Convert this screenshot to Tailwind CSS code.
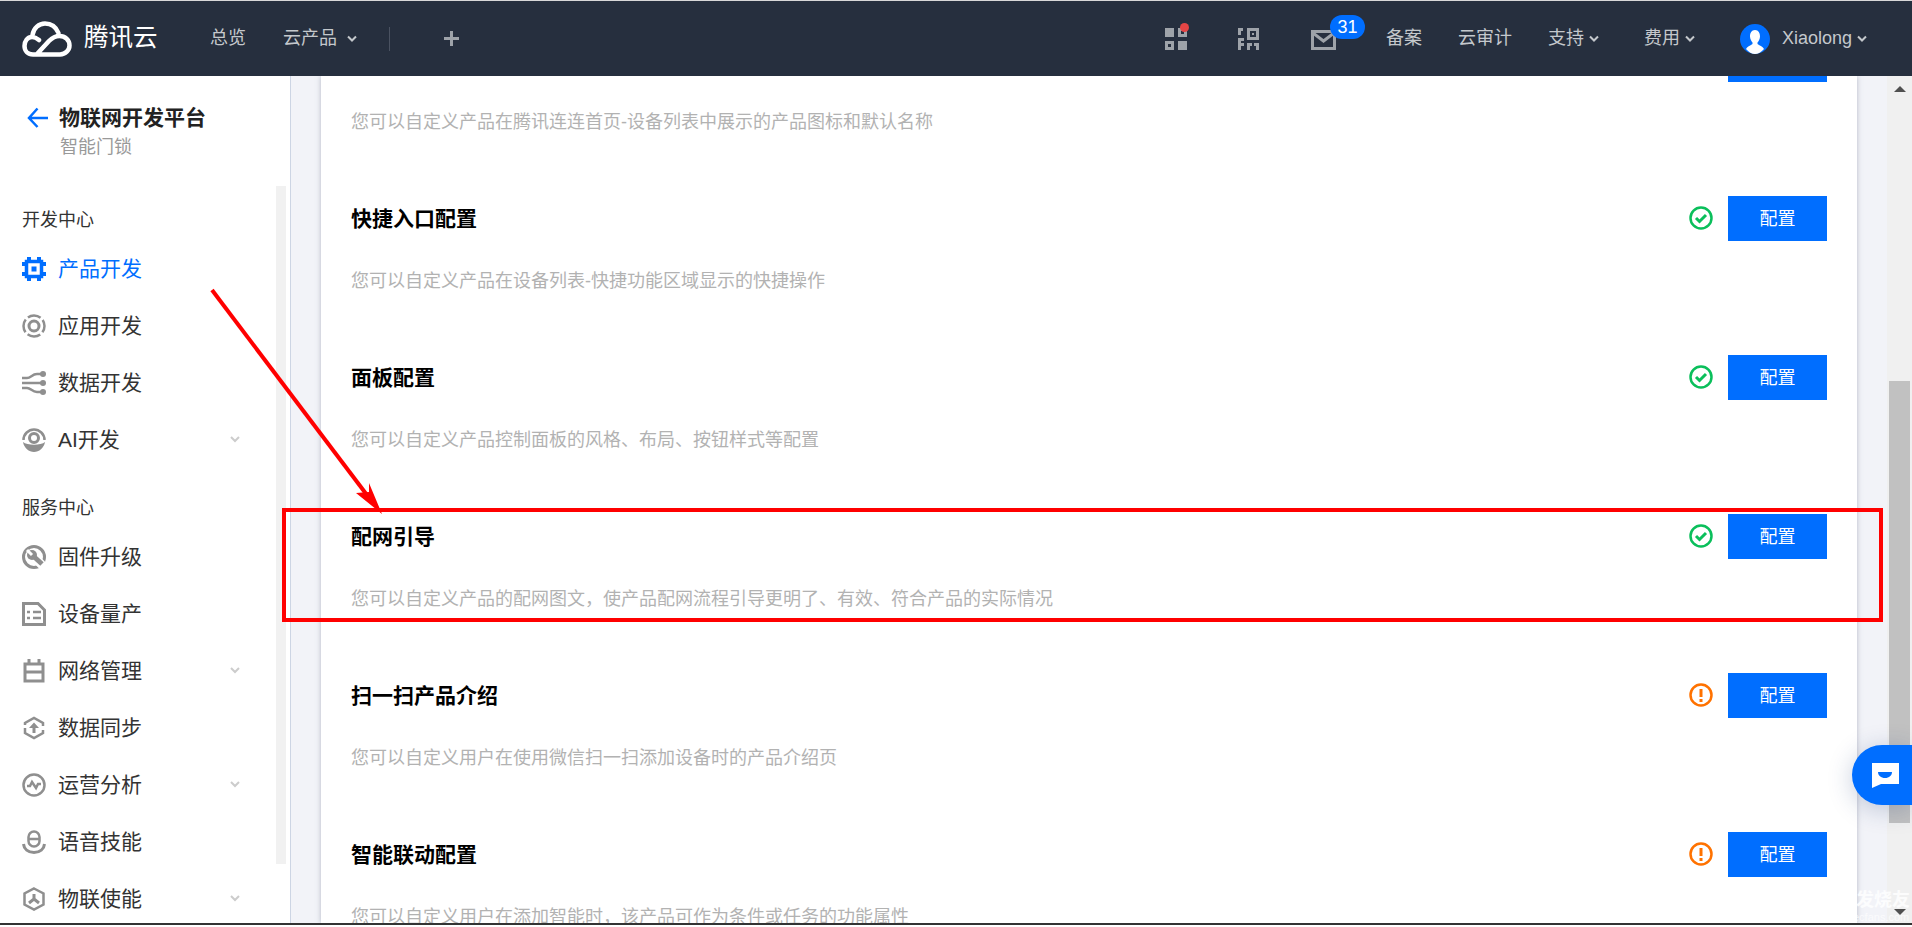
<!DOCTYPE html>
<html lang="zh-CN">
<head>
  <meta charset="UTF-8">
  <title>物联网开发平台</title>
  <script src="https://cdn.jsdelivr.net/npm/@tailwindcss/browser@4"></script>
</head>
<body class="relative h-[927px] w-[1912px] overflow-hidden bg-white font-['Liberation_Sans','Noto_Sans_CJK_SC',sans-serif] text-[18px]">
  <div class="h-px bg-[#d8d8d8]"></div>

  <!-- Header -->
  <header class="flex h-[75px] items-center bg-[#262f3e] pl-[22px] text-[18px] text-[#c4c8cc]">
    <svg class="h-[36px] w-[50px]" viewBox="0 0 50 36" fill="none" stroke="#fff" stroke-width="4.500" stroke-linecap="round" stroke-linejoin="round">
      <path d="M17 19C14 16.500 12 16 10 16C5.500 16 2.500 20 2.500 25C2.500 30 6 33.500 11 33.500H38C43.500 33.500 47.500 29 47.500 24.500C47.500 19 43 15 37.500 15C33 15 30 17 27 20L15 33"/>
      <path d="M10.500 14C11.500 7 17 2.500 23 2.500C29 2.500 34 6 36.500 12"/>
    </svg>
    <span class="ml-[12px] text-[24.500px] text-white">腾讯云</span>
    <span class="ml-[52.500px]">总览</span>
    <span class="ml-[37px]">云产品</span>
    <svg class="ml-[10px] h-[8px] w-[10px]" viewBox="0 0 10 8" fill="none" stroke="#c4c8cc" stroke-width="2"><path d="M1 1.500L5 5.500L9 1.500"/></svg>
    <div class="ml-[32px] h-[24px] w-px bg-[#4a5261]"></div>
    <svg class="ml-[54px] h-[15px] w-[15px]" viewBox="0 0 15 15" fill="#9ea3a9"><path d="M6 0H9V6H15V9H9V15H6V9H0V6H6Z"/></svg>

    <div class="ml-auto flex items-center">
      <div class="relative h-[22px] w-[22px]">
        <svg class="h-[22px] w-[22px]" viewBox="0 0 22 22" fill="#9ea3a9"><path d="M0 0H9V9H0ZM0 13H9V22H0ZM13 13H22V22H13ZM13 0H22V9H13Z"/><path fill="#262f3e" d="M3 16H6V19H3ZM16 3H19V6H16Z"/></svg>
        <div class="absolute -top-[5px] left-[15px] h-[9px] w-[9px] rounded-full bg-[#e54545]"></div>
      </div>
      <svg class="ml-[50px] h-[22px] w-[22px]" viewBox="0 0 22 22" fill="#9ea3a9"><path d="M1 0H6V3H4V7H1ZM10 0H22V12H10ZM13 3V9H19V3ZM15 5H17V7H15ZM1 10H7V13H4V15H7V18H4V22H1ZM10 15H15V18H13V22H10ZM17 15H22V22H19V18H17Z"/></svg>
      <div class="relative ml-[52px] mt-[3px] h-[20px] w-[25px]">
        <svg class="h-[20px] w-[25px]" viewBox="0 0 25 20" fill="none" stroke="#9ea3a9" stroke-width="3"><path d="M1.500 1.500H23.500V18.500H1.500Z"/><path d="M2 3L12.500 11L23 3"/></svg>
        <div class="absolute -top-[15px] left-[19px] flex h-[24px] w-[35px] items-center justify-center rounded-[12px] bg-[#006eff] text-[18px] text-white">31</div>
      </div>
      <span class="ml-[50px]">备案</span>
      <span class="ml-[36px]">云审计</span>
      <span class="ml-[36px]">支持</span>
      <svg class="ml-[5px] h-[8px] w-[10px]" viewBox="0 0 10 8" fill="none" stroke="#c4c8cc" stroke-width="2"><path d="M1 1.500L5 5.500L9 1.500"/></svg>
      <span class="ml-[45px]">费用</span>
      <svg class="ml-[5px] h-[8px] w-[10px]" viewBox="0 0 10 8" fill="none" stroke="#c4c8cc" stroke-width="2"><path d="M1 1.500L5 5.500L9 1.500"/></svg>
      <svg class="ml-[45px] h-[30px] w-[30px]" viewBox="0 0 30 30"><circle cx="15" cy="15" r="15" fill="#006eff"/><path fill="#fff" d="M15 6C11.500 6 10 9 10 12.500C10 15 11.500 17.500 12.500 18.500V20C10 22 7 22.500 6 25C8.500 28 12 30 15 30C18 30 21.500 28 24 25C23 22.500 20 22 17.500 20V18.500C18.500 17.500 20 15 20 12.500C20 9 18.500 6 15 6Z"/></svg>
      <span class="ml-[12px]">Xiaolong</span>
      <svg class="ml-[5px] mr-[45px] h-[8px] w-[10px]" viewBox="0 0 10 8" fill="none" stroke="#c4c8cc" stroke-width="2"><path d="M1 1.500L5 5.500L9 1.500"/></svg>
    </div>
  </header>

  <div class="flex h-[849px] border-b-2 border-[#333]">
    <!-- Sidebar -->
    <aside class="relative h-full w-[291px] shrink-0 overflow-hidden border-r border-[#cdd5e4] bg-white">
      <div class="absolute left-[276px] top-[110px] h-[678px] w-[10px] bg-[#f1f1f1]"></div>
      <div class="flex items-center pl-[27px] pt-[28px]">
        <svg class="h-[22px] w-[22px]" viewBox="0 0 22 22" fill="none" stroke="#006eff" stroke-width="2.500"><path d="M21 11H2M10.500 1.500L2 11L10.500 20"/></svg>
        <span class="ml-[10px] text-[21px] font-bold leading-[28px] text-[#222]">物联网开发平台</span>
      </div>
      <p class="mt-[2px] pl-[60px] leading-[26px] text-[#999]">智能门锁</p>

      <p class="pl-[22px] pt-[47px] leading-[26px] text-[#333]">开发中心</p>
      <ul class="mt-[7px] text-[21px] text-[#333]">
        <li class="flex h-[57px] items-center pl-[22px] text-[#006eff]">
          <svg class="h-[24px] w-[24px]" viewBox="0 0 24 24" fill="none" stroke="#006eff"><rect x="4.500" y="4.500" width="15" height="15" stroke-width="3.500"/><rect x="9.500" y="9.500" width="5" height="5" fill="#006eff" stroke="none"/><path stroke-width="4" d="M7 0V4M17 0V4M7 20V24M17 20V24M0 7H4M0 17H4M20 7H24M20 17H24"/></svg>
          <span class="ml-[12px]">产品开发</span>
        </li>
        <li class="flex h-[57px] items-center pl-[22px]">
          <svg class="h-[24px] w-[24px]" viewBox="0 0 24 24" fill="none" stroke="#8f8f8f"><circle cx="12" cy="12" r="10.500" stroke-width="2.500" stroke-dasharray="13.500 2.990" stroke-dashoffset="6.750"/><circle cx="12" cy="12" r="5" stroke-width="3"/></svg>
          <span class="ml-[12px]">应用开发</span>
        </li>
        <li class="flex h-[57px] items-center pl-[22px]">
          <svg class="h-[24px] w-[24px]" viewBox="0 0 24 24" fill="none" stroke="#8f8f8f" stroke-width="2.500"><path d="M0 7H5C9 7 10 3 15 3H20M0 12H20M0 17H5C9 17 10 21 15 21H20"/><g fill="#8f8f8f" stroke="none"><circle cx="21" cy="3" r="3"/><circle cx="21" cy="12" r="3"/><circle cx="21" cy="21" r="3"/></g></svg>
          <span class="ml-[12px]">数据开发</span>
        </li>
        <li class="flex h-[57px] items-center pl-[22px]">
          <svg class="h-[24px] w-[24px]" viewBox="0 0 24 24" fill="none" stroke="#8f8f8f" stroke-width="2.500"><path d="M1.500 12C1.500 6 6.500 1.500 12 1.500C17.500 1.500 22.500 6 22.500 12"/><circle cx="12" cy="10" r="4.500" stroke-width="3"/><path fill="#8f8f8f" stroke="none" d="M1 14C5 17.500 19 17.500 23 14C22 20 17 24 12 24C7 24 2 20 1 14Z"/></svg>
          <span class="ml-[12px]">AI开发</span>
          <svg class="absolute left-[230px] h-[7px] w-[10px]" viewBox="0 0 10 7" fill="none" stroke="#ccc" stroke-width="2"><path d="M1 1L5 5L9 1"/></svg>
        </li>
      </ul>

      <p class="pl-[22px] pt-[27px] leading-[26px] text-[#333]">服务中心</p>
      <ul class="mt-[7px] text-[21px] text-[#333]">
        <li class="flex h-[57px] items-center pl-[22px]">
          <svg class="h-[24px] w-[24px]" viewBox="0 0 24 24" fill="none" stroke="#8f8f8f"><circle cx="12" cy="12" r="10.500" stroke-width="3"/><path stroke="#fff" stroke-width="9" d="M11 11L24 24"/><path stroke-width="5" d="M9 9L20 19"/><circle cx="10" cy="10" r="5" fill="#8f8f8f" stroke="none"/><path stroke="#fff" stroke-width="3" d="M5 5L10 10"/></svg>
          <span class="ml-[12px]">固件升级</span>
        </li>
        <li class="flex h-[57px] items-center pl-[22px]">
          <svg class="h-[24px] w-[24px]" viewBox="0 0 24 24" fill="none" stroke="#8f8f8f" stroke-width="3"><path d="M1.500 1.500H16L22.500 8V22.500H1.500Z"/><path stroke-width="2.500" d="M5 10H8M11 10H19M5 16H8M11 16H19"/></svg>
          <span class="ml-[12px]">设备量产</span>
        </li>
        <li class="flex h-[57px] items-center pl-[22px]">
          <svg class="h-[24px] w-[24px]" viewBox="0 0 24 24" fill="none" stroke="#8f8f8f" stroke-width="3"><path d="M3 5H21V22H3ZM3 13H21M7 0V5M17 0V5"/></svg>
          <span class="ml-[12px]">网络管理</span>
          <svg class="absolute left-[230px] h-[7px] w-[10px]" viewBox="0 0 10 7" fill="none" stroke="#ccc" stroke-width="2"><path d="M1 1L5 5L9 1"/></svg>
        </li>
        <li class="flex h-[57px] items-center pl-[22px]">
          <svg class="h-[24px] w-[24px]" viewBox="0 0 24 24" fill="none" stroke="#8f8f8f" stroke-width="2.500"><path d="M3 9V7L12 2L21 7V10M21 14V17L12 22L3 17V12"/><path fill="#8f8f8f" stroke="none" d="M12 6.500L17 12H13.500V17H10.500V12H7Z"/></svg>
          <span class="ml-[12px]">数据同步</span>
        </li>
        <li class="flex h-[57px] items-center pl-[22px]">
          <svg class="h-[24px] w-[24px]" viewBox="0 0 24 24" fill="none" stroke="#8f8f8f" stroke-width="2.500"><circle cx="12" cy="12" r="10.500"/><path d="M5 13H8L10 9L14 15L16 11H19"/></svg>
          <span class="ml-[12px]">运营分析</span>
          <svg class="absolute left-[230px] h-[7px] w-[10px]" viewBox="0 0 10 7" fill="none" stroke="#ccc" stroke-width="2"><path d="M1 1L5 5L9 1"/></svg>
        </li>
        <li class="flex h-[57px] items-center pl-[22px]">
          <svg class="h-[24px] w-[24px]" viewBox="0 0 24 24" fill="none" stroke="#8f8f8f" stroke-width="2.500"><rect x="6.500" y="1.500" width="11" height="15" rx="5.500"/><path d="M7 9H17"/><path stroke-width="3" d="M1.500 14C2 19 6 22.500 12 22.500C18 22.500 22 19 22.500 14"/></svg>
          <span class="ml-[12px]">语音技能</span>
        </li>
        <li class="flex h-[57px] items-center pl-[22px]">
          <svg class="h-[24px] w-[24px]" viewBox="0 0 24 24" fill="none" stroke="#8f8f8f" stroke-width="2.500"><path d="M12 1.500L21.500 6.500V17.500L12 22.500L2.500 17.500V6.500Z"/><path d="M12 7V12L7 16M12 12L17 16" stroke-width="3"/></svg>
          <span class="ml-[12px]">物联使能</span>
          <svg class="absolute left-[230px] h-[7px] w-[10px]" viewBox="0 0 10 7" fill="none" stroke="#ccc" stroke-width="2"><path d="M1 1L5 5L9 1"/></svg>
        </li>
      </ul>
    </aside>

    <!-- Content -->
    <main class="flex min-w-0 flex-1 overflow-hidden bg-[#f2f3f8]">
      <div class="ml-[30px] w-[1536px] shrink-0 bg-white px-[30px] shadow-[0_0_5px_rgba(120,130,150,0.5)]">
        <div class="-mt-[39px]">
          <section class="h-[159px]">
            <div class="flex h-[45px] items-center justify-end gap-[15px]">
              <button class="h-[45px] w-[99px] bg-[#006eff] pt-[2px] text-white">配置</button>
            </div>
            <p class="mt-[28px] leading-[24px] text-[#b2b2b2]">您可以自定义产品在腾讯连连首页-设备列表中展示的产品图标和默认名称</p>
          </section>
          <section class="h-[159px]">
            <div class="flex h-[45px] items-center gap-[15px]">
              <h3 class="mr-auto text-[21px] font-bold text-black">快捷入口配置</h3>
              <svg class="mb-[2px] h-[24px] w-[24px]" viewBox="0 0 24 24" fill="none" stroke="#0abf5b" stroke-width="2.500"><circle cx="12" cy="12" r="10.500"/><path stroke-width="3" d="M7 12L10.500 15.500L17 9"/></svg>
              <button class="h-[45px] w-[99px] bg-[#006eff] pt-[2px] text-white">配置</button>
            </div>
            <p class="mt-[28px] leading-[24px] text-[#b2b2b2]">您可以自定义产品在设备列表-快捷功能区域显示的快捷操作</p>
          </section>
          <section class="h-[159px]">
            <div class="flex h-[45px] items-center gap-[15px]">
              <h3 class="mr-auto text-[21px] font-bold text-black">面板配置</h3>
              <svg class="mb-[2px] h-[24px] w-[24px]" viewBox="0 0 24 24" fill="none" stroke="#0abf5b" stroke-width="2.500"><circle cx="12" cy="12" r="10.500"/><path stroke-width="3" d="M7 12L10.500 15.500L17 9"/></svg>
              <button class="h-[45px] w-[99px] bg-[#006eff] pt-[2px] text-white">配置</button>
            </div>
            <p class="mt-[28px] leading-[24px] text-[#b2b2b2]">您可以自定义产品控制面板的风格、布局、按钮样式等配置</p>
          </section>
          <section class="h-[159px]">
            <div class="flex h-[45px] items-center gap-[15px]">
              <h3 class="mr-auto text-[21px] font-bold text-black">配网引导</h3>
              <svg class="mb-[2px] h-[24px] w-[24px]" viewBox="0 0 24 24" fill="none" stroke="#0abf5b" stroke-width="2.500"><circle cx="12" cy="12" r="10.500"/><path stroke-width="3" d="M7 12L10.500 15.500L17 9"/></svg>
              <button class="h-[45px] w-[99px] bg-[#006eff] pt-[2px] text-white">配置</button>
            </div>
            <p class="mt-[28px] leading-[24px] text-[#b2b2b2]">您可以自定义产品的配网图文，使产品配网流程引导更明了、有效、符合产品的实际情况</p>
          </section>
          <section class="h-[159px]">
            <div class="flex h-[45px] items-center gap-[15px]">
              <h3 class="mr-auto text-[21px] font-bold text-black">扫一扫产品介绍</h3>
              <svg class="mb-[2px] h-[24px] w-[24px]" viewBox="0 0 24 24" fill="none" stroke="#ff7200" stroke-width="2.500"><circle cx="12" cy="12" r="10.500"/><path stroke-width="3" d="M12 6V14M12 16V19"/></svg>
              <button class="h-[45px] w-[99px] bg-[#006eff] pt-[2px] text-white">配置</button>
            </div>
            <p class="mt-[28px] leading-[24px] text-[#b2b2b2]">您可以自定义用户在使用微信扫一扫添加设备时的产品介绍页</p>
          </section>
          <section class="h-[159px]">
            <div class="flex h-[45px] items-center gap-[15px]">
              <h3 class="mr-auto text-[21px] font-bold text-black">智能联动配置</h3>
              <svg class="mb-[2px] h-[24px] w-[24px]" viewBox="0 0 24 24" fill="none" stroke="#ff7200" stroke-width="2.500"><circle cx="12" cy="12" r="10.500"/><path stroke-width="3" d="M12 6V14M12 16V19"/></svg>
              <button class="h-[45px] w-[99px] bg-[#006eff] pt-[2px] text-white">配置</button>
            </div>
            <p class="mt-[28px] leading-[24px] text-[#b2b2b2]">您可以自定义用户在添加智能时，该产品可作为条件或任务的功能属性</p>
          </section>
        </div>
      </div>
      <!-- Page scrollbar -->
      <div class="ml-auto flex h-full w-[25px] flex-col items-center bg-[#f0f0f0]">
        <div class="mt-[10px] h-0 w-0 border-x-[6px] border-b-[6px] border-x-transparent border-b-[#505050]"></div>
        <div class="mt-[289px] h-[442px] w-[21px] bg-[#c1c1c1]"></div>
        <div class="mt-[86px] h-0 w-0 border-x-[6px] border-t-[6px] border-x-transparent border-t-[#505050]"></div>
      </div>
    </main>
  </div>

  <!-- Floating chat button -->
  <div class="absolute left-[1852px] top-[745px] flex h-[60px] w-[60px] items-center rounded-l-[30px] bg-[#006eff] pl-[20px] shadow-[0_4px_24px_rgba(30,60,120,0.25)]">
    <svg class="h-[25px] w-[27px]" viewBox="0 0 27 25"><path fill="#fff" d="M0 0H27V21H9L0 25Z"/><path fill="#006eff" d="M6 9H20C20 12.500 17 15 13 15C9 15 6 12.500 6 9Z"/></svg>
  </div>

  <!-- Watermark -->
  <div class="absolute left-[1856px] top-[890px] text-[18px] font-bold leading-[20px] text-white/80">发烧友</div>
  <div class="absolute left-[1853px] top-[911px] text-[11px] leading-[12px] text-white/70">ecfans.com</div>

  <!-- Red annotations drawn over the screenshot -->
  <svg class="pointer-events-none absolute left-0 top-0 h-[927px] w-[1912px]" viewBox="0 0 1912 927" fill="none">
    <rect x="284" y="510" width="1597" height="110" stroke="#f00" stroke-width="4"/>
    <path d="M212 290L373 503" stroke="#f00" stroke-width="4"/>
    <path fill="#f00" d="M382 514L356 493L369 492L369 483Z"/>
  </svg>
</body>
</html>
